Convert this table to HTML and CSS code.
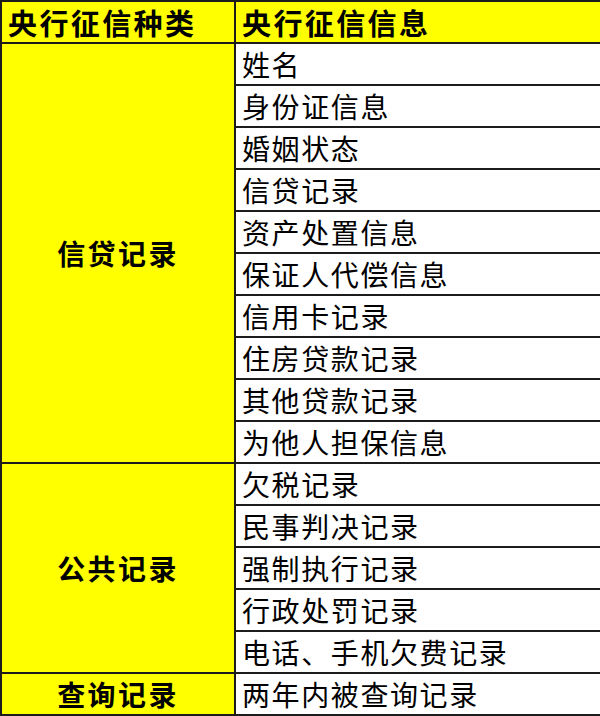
FILE: index.html
```html
<!DOCTYPE html>
<html lang="zh-CN">
<head>
<meta charset="utf-8">
<title>央行征信</title>
<link rel="stylesheet" href="styles.css">
</head>
<body>
<table class="credit">
  <colgroup><col class="c1"><col class="c2"></colgroup>
  <thead>
    <tr><th class="hd">央行征信种类</th><th class="hd">央行征信信息</th></tr>
  </thead>
  <tbody>
    <tr><th class="cat" rowspan="10">信贷记录</th><td>姓名</td></tr>
    <tr><td>身份证信息</td></tr>
    <tr><td>婚姻状态</td></tr>
    <tr><td>信贷记录</td></tr>
    <tr><td>资产处置信息</td></tr>
    <tr><td>保证人代偿信息</td></tr>
    <tr><td>信用卡记录</td></tr>
    <tr><td>住房贷款记录</td></tr>
    <tr><td>其他贷款记录</td></tr>
    <tr><td>为他人担保信息</td></tr>
    <tr><th class="cat" rowspan="5">公共记录</th><td>欠税记录</td></tr>
    <tr><td>民事判决记录</td></tr>
    <tr><td>强制执行记录</td></tr>
    <tr><td>行政处罚记录</td></tr>
    <tr><td>电话、手机欠费记录</td></tr>
    <tr><th class="cat">查询记录</th><td>两年内被查询记录</td></tr>
  </tbody>
</table>
</body>
</html>
```
FILE: styles.css
```css
html, body {
  margin: 0;
  padding: 0;
  background: #ffffff;
}
.credit {
  width: 600px;
  height: 716px;
  border-collapse: collapse;
  table-layout: fixed;
  font-family: "Noto Sans CJK SC", "Noto Sans", sans-serif;
  color: #000;
}
.c1 { width: 234px; }
.c2 { width: 366px; }
.credit th, .credit td {
  border: 2px solid #1c1c1c;
  padding: 0 0 0 6px;
  height: 40px;
  line-height: 40px;
  font-size: 28px;
  letter-spacing: 1.6px;
  text-align: left;
  white-space: nowrap;
  background: #ffffff;
}
.credit th.hd {
  background: #ffff00;
  font-weight: 700;
  font-size: 29px;
  letter-spacing: 2.4px;
}
.credit th.cat {
  background: #ffff00;
  font-weight: 700;
  text-align: center;
  padding: 0;
  font-size: 28px;
  letter-spacing: 2.4px;
}
```
